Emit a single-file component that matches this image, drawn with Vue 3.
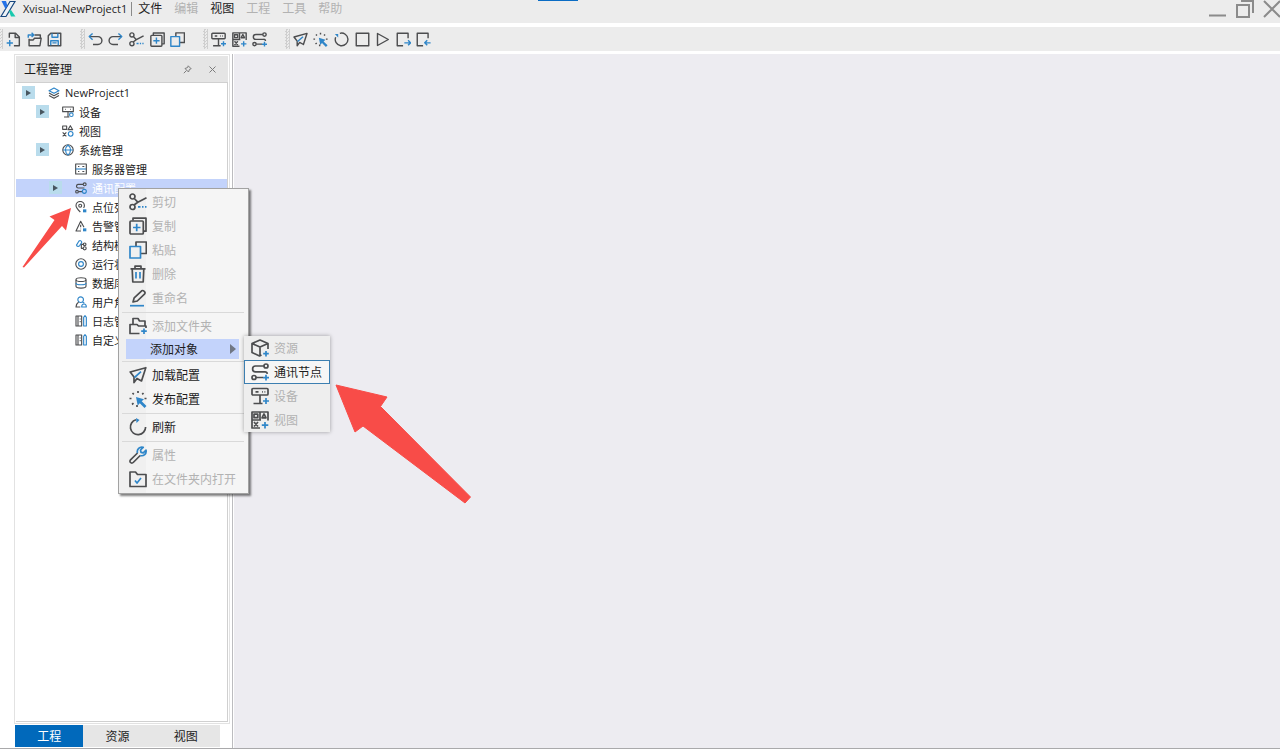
<template>
  <div class="app-shell">
    <svg class="icon-defs" aria-hidden="true">
      <symbol id="i-new" viewBox="0 0 18 18">
        <path d="M4 7V1.500h7.500l4.500 4.500v10.500H9.500" />
        <path d="M11 1.800V6.500h4.800" />
        <path class="blue" d="M4.500 9.500v7.500M.8 13.200h7.500" />
      </symbol>
      <symbol id="i-open" viewBox="0 0 18 18">
        <path d="M9 3.500h7v3.500M2.500 8v8.500h13l1.500-9H9L7.500 9.500h-5" />
        <path class="blue" d="M1.500 7V3.500h6.500M5.500 1l2.700 2.500L5.500 6" />
      </symbol>
      <symbol id="i-save" viewBox="0 0 18 18">
        <path d="M4.500 1.500h12v15h-15v-12z" />
        <path class="blue" d="M6 1.800v4.500h7V1.800M4.500 16v-5.500h9V16M6.500 13h5" />
      </symbol>
      <symbol id="i-undo" viewBox="0 0 18 18">
        <path d="M2 5.500h10a4.700 4.700 0 0 1 0 9.400H6" />
        <path class="blue" d="M5.500 1.800 1.500 5.500l4 3.700" />
      </symbol>
      <symbol id="i-redo" viewBox="0 0 18 18">
        <path d="M16 5.500H6a4.700 4.700 0 0 0 0 9.400h6" />
        <path class="blue" d="m12.500 1.800 4 3.700-4 3.700" />
      </symbol>
      <symbol id="i-cut" viewBox="0 0 18 18">
        <circle cx="3.500" cy="3.500" r="2.500" />
        <circle cx="3.500" cy="14" r="2.500" />
        <path d="m5.300 5.500 3.500 3.700 8.700-4.500M5 12l3.800-2.800" />
        <path class="blue" d="M9 13.800h2.500M13 13.800h1.500M16 13.800h1.500" />
      </symbol>
      <symbol id="i-copy" viewBox="0 0 18 18">
        <path d="M4 3.500V1.200h13v13h-2.500" />
        <rect x="1" y="4" width="13.300" height="13" rx="1" />
        <path class="blue" d="M7.700 6.700v7.500M4 10.500h7.500" />
      </symbol>
      <symbol id="i-paste" viewBox="0 0 18 18">
        <path d="M7 5.500V1h10.300v11.500H12" />
        <path class="blue" d="M1 5.500h10.500V17H1z" />
      </symbol>
      <symbol id="i-delete" viewBox="0 0 18 18">
        <path d="M1.500 3.800h15M6 3.500V1.200h6v2.300M3.200 4l.6 13h10.400l.6-13" />
        <path class="blue" d="M7 7v6.500M11 7v6.500" />
      </symbol>
      <symbol id="i-rename" viewBox="0 0 18 18">
        <path d="m4 13 1.200-4.200 7.500-7 c1.500-1 4.200 1.300 3 3L8.300 12z" />
        <path class="blue" d="M1 16.700h14" />
      </symbol>
      <symbol id="i-add-folder" viewBox="0 0 18 18">
        <path d="M4 7.500V1.500h5L10.500 4H16v5M10.500 16.500H1v-9h7L9.500 9H17v2" />
        <path class="blue" d="M15 11.500v5.500M12.200 14.200h5.600" />
      </symbol>
      <symbol id="i-device" viewBox="0 0 18 18">
        <rect x="1" y="1.500" width="16" height="6.500" rx="1" />
        <path d="M9 8v8.500M2.500 16.500h9M4.500 4.800h3M11 4.800h.8M13.500 4.800h.8" />
        <path class="blue" d="M15 11v6M12 14h6" />
      </symbol>
      <symbol id="i-view" viewBox="0 0 18 18">
        <path d="M9 17H1V1h16v8.500M9 1.500v8M1.500 9H10" />
        <rect x="3" y="3.200" width="3.800" height="3.500" />
        <path d="m13 3 2 3.800h-4zM3 11l4 4.500M7 11l-4 4.500" />
        <path class="blue" d="M14 11v6.500M10.800 14.200h6.500" />
      </symbol>
      <symbol id="i-route" viewBox="0 0 18 18">
        <circle cx="15" cy="3" r="2" />
        <circle cx="3" cy="14.500" r="2" />
        <path d="M13 3H4.500a2.900 2.900 0 0 0 0 5.800h9.500a2.300 2.300 0 0 1 2.300 2M5 14.500h7" />
        <path class="blue" d="M15 11.800v5.700M12 14.600h6" />
      </symbol>
      <symbol id="i-send" viewBox="0 0 18 18">
        <path d="m1.200 6 15.600-4.300L12.500 15 8 12.500l-3 4V11z" />
        <path class="blue" d="M5.500 11.500 12 5.700" />
      </symbol>
      <symbol id="i-publish" viewBox="0 0 18 18">
        <path d="M9 1v2M3.500 3l1.300 1.300M.5 8.500h2M3 14.500l1.500-1.300M8 15v2M14.500 3l-1.300 1.300M15.500 8.500h2" />
        <path class="blue-fill" d="m7 7 8 2.300-2.300 2L17.500 16l-2 2-4.700-4.800L8.700 15.500z" />
      </symbol>
      <symbol id="i-refresh" viewBox="0 0 18 18">
        <path d="M7 1.700A7.600 7.600 0 1 0 16.600 9" />
        <path class="blue-fill" d="m7 0 3.500 2L7.500 5z" />
      </symbol>
      <symbol id="i-rotate" viewBox="0 0 18 18">
        <path d="M7 1.600a7.600 7.600 0 1 1-5 4.600" />
        <path class="blue-fill" d="M1 2.500h4v4z" />
      </symbol>
      <symbol id="i-stop" viewBox="0 0 18 18"><path d="M1.500 1.500h15v15h-15z" /></symbol>
      <symbol id="i-play" viewBox="0 0 18 18"><path d="M3 1.800 16 9 3 16.200z" /></symbol>
      <symbol id="i-export" viewBox="0 0 18 18">
        <path d="M8.500 16.500h-7v-15h13v6" />
        <path class="blue" d="M10 13h7.500M14.500 10l3 3-3 3" />
      </symbol>
      <symbol id="i-import" viewBox="0 0 18 18">
        <path d="M8.500 16.500h-7v-15h13v6" />
        <path class="blue" d="M10.500 13h7M13.500 10l-3 3 3 3" />
      </symbol>
      <symbol id="i-wrench" viewBox="0 0 18 18">
        <path d="m8.500 7-7 6.800a1.900 1.900 0 0 0 2.700 2.700L11.200 9.500" />
        <path class="blue" d="M8.500 7a4.500 4.500 0 0 1 5.700-5.600L11.500 4l.5 2.300 2.300.5L17 4.200a4.500 4.500 0 0 1-5.800 5.300" />
      </symbol>
      <symbol id="i-folder-check" viewBox="0 0 18 18">
        <path d="M1 2h5.500L8.500 4.500H17v12H1z" />
        <path class="blue" d="m6 10.500 2 2.500 4-5" />
      </symbol>
      <symbol id="i-cube" viewBox="0 0 18 18">
        <path d="M10.500 16 8.500 17 1 13.500v-9L9 1l8 3.500V10M1 4.500 9 8l8-3.500M9 8v9" />
        <path class="blue" d="M15 12v5.500M12.200 14.700h5.600" />
      </symbol>
      <symbol id="i-layers" viewBox="0 0 18 18">
        <path class="blue" d="M9 1.500 1.500 5.500 9 9.500l7.500-4z" />
        <path d="m1.500 9 7.500 4 7.500-4M1.500 12.700l7.500 4 7.500-4" />
      </symbol>
      <symbol id="i-tree-device" viewBox="0 0 18 18">
        <path d="M1 1.500h16v7H1zM4.500 5h1M9 8.500v8M3 16.500h8M12.500 5h1" />
        <circle class="blue" cx="14" cy="13" r="2.700" />
      </symbol>
      <symbol id="i-tree-view" viewBox="0 0 18 18">
        <path d="M1 1.500h6v5H1zM12.500 1l3.500 6H9zM1 11l5.500 6M6.500 11 1 17" />
        <circle class="blue" cx="13" cy="13.300" r="3.500" />
      </symbol>
      <symbol id="i-globe" viewBox="0 0 18 18">
        <circle cx="9" cy="9" r="7.800" />
        <path class="blue" d="M1.500 9h15M9 1.500c-5 4-5 11 0 15M9 1.500c5 4 5 11 0 15" />
      </symbol>
      <symbol id="i-server" viewBox="0 0 18 18">
        <path d="M1 1.500h16v15H1z" />
        <path class="blue" d="M1.500 9h15" />
        <path d="M4.500 5.200h2M11 5.200h3M4.500 12.800h2M11 12.800h3" />
      </symbol>
      <symbol id="i-comm" viewBox="0 0 18 18">
        <path d="M12 3.500H4.500a2.800 2.800 0 0 0 0 5.500H14M5 14.500h6" />
        <circle cx="14.500" cy="3.500" r="2.200" />
        <circle cx="3" cy="14.500" r="2" />
        <circle class="blue" cx="14" cy="14" r="3" />
      </symbol>
      <symbol id="i-pin-point" viewBox="0 0 18 18">
        <path d="M8 16.500C4 12.500 1.500 10 1.500 7a6.300 6.300 0 0 1 12.600 0c0 1.300-.5 2.500-1.200 3.600" />
        <circle cx="7.800" cy="7" r="2.200" />
        <path class="blue-fill" d="M12 12.500h5v4.500h-5z" />
      </symbol>
      <symbol id="i-alarm" viewBox="0 0 18 18">
        <path d="M9 16.500H1.500L8.500 2l5 9M8.500 7v4M8.500 13v1" />
        <path class="blue-fill" d="M12 12.500h5v4.500h-5z" />
      </symbol>
      <symbol id="i-struct" viewBox="0 0 18 18">
        <path class="blue" d="M2 9.500 6 3a2.500 2.500 0 0 1 4 2.500L7 10a3 3 0 0 1-5-.5" />
        <path d="M9.500 8h3M9.500 8v6h3" />
        <circle cx="14.500" cy="8" r="2" />
        <circle cx="14.500" cy="14" r="2.300" />
      </symbol>
      <symbol id="i-status" viewBox="0 0 18 18">
        <circle cx="9" cy="9" r="7.800" />
        <circle class="blue" cx="9" cy="9" r="3.600" />
      </symbol>
      <symbol id="i-database" viewBox="0 0 18 18">
        <ellipse cx="9" cy="4" rx="7.500" ry="2.800" />
        <path d="M1.500 4v10c0 3.500 15 3.500 15 0V4" />
        <path class="blue" d="M1.500 9c0 3.500 15 3.500 15 0" />
      </symbol>
      <symbol id="i-user" viewBox="0 0 18 18">
        <circle class="blue" cx="8.500" cy="5.500" r="4.200" />
        <path d="M5.500 9C3 10.500 2 13 1.500 16.500H8" />
        <path class="blue" d="M10 16.500c0-6 7-6 7 0zM11 9l3 1.500" />
      </symbol>
      <symbol id="i-log" viewBox="0 0 18 18">
        <path d="M10 1.500H1.500v15H10zM4.500 1.500v15M7 6h1.500M7 10h1.500" />
        <path class="blue" d="M13 3.500 15 1l2 2.500v13h-4z" />
      </symbol>
    </svg>

    <header class="title-bar">
      <svg class="logo" viewBox="0 0 16 18" aria-hidden="true">
        <path d="M10 1.500h5L6 16.500H1z" fill="#eef3f7" stroke="#17477f" stroke-width="1.200" />
        <path fill="#19c9ae" d="m9 11 2-1 4.500 6.500H11z" />
        <path fill="#2472e8" d="M1.500 1H6l1.500 5-2 3z" />
      </svg>
      <h1 class="app-title">Xvisual-NewProject1</h1>
      <nav class="main-menu" aria-label="主菜单">
        <button v-for="item in mainMenu" :key="item.label" type="button" :disabled="item.disabled">
          {{ item.label }}
        </button>
      </nav>
      <div class="window-controls">
        <button type="button" aria-label="最小化">
          <svg viewBox="0 0 18 18"><path d="M0 15.500h17" /></svg>
        </button>
        <button type="button" aria-label="还原">
          <svg viewBox="0 0 18 18"><path d="M1 5h12v12H1zM5 1h12v12" /></svg>
        </button>
        <button type="button" aria-label="关闭">
          <svg viewBox="0 0 18 18"><path d="m1 1 16 16M17 1 1 17" /></svg>
        </button>
      </div>
    </header>

    <div class="tool-bar" role="toolbar" aria-label="工具栏">
      <div v-for="(group, i) in toolGroups" :key="i" class="tool-group">
        <span class="grip" aria-hidden="true"></span>
        <div class="tool-items" :style="{ width: group.width + 'px' }">
          <button v-for="tool in group.tools" :key="tool.icon" type="button" :aria-label="tool.label">
            <svg class="icon"><use :href="'#i-' + tool.icon" /></svg>
          </button>
        </div>
      </div>
    </div>

    <div class="main-area">
      <aside class="dock">
        <section class="panel">
          <header class="panel-header">
            <h2>工程管理</h2>
            <button type="button" aria-label="固定">
              <svg viewBox="0 0 9 9"><path d="M5.200.8 8.200 3.800 6.500 4.300 5.500 7 2 3.500 4.700 2.500zM3.500 5.500.8 8.200" /></svg>
            </button>
            <button type="button" aria-label="关闭面板">
              <svg viewBox="0 0 9 9"><path d="m1.500 1.500 6 6M7.500 1.500l-6 6" /></svg>
            </button>
          </header>
          <ul class="tree">
            <li
              v-for="node in treeNodes"
              :key="node.label"
              class="tree-row"
              :class="['level-' + node.level, { selected: node.label === selectedNode }]"
              @click="selectedNode = node.label"
            >
              <button v-if="node.branch" class="expander" type="button" :aria-label="'展开' + node.label">
                <svg viewBox="0 0 5 6"><path d="M0 0v6l5-3z" /></svg>
              </button>
              <span v-else class="expander-space"></span>
              <svg class="icon"><use :href="'#i-' + node.icon" /></svg>
              <span>{{ node.label }}</span>
            </li>
          </ul>
        </section>
        <div class="dock-tabs" role="tablist">
          <button
            v-for="tab in tabs"
            :key="tab"
            type="button"
            role="tab"
            :class="{ active: tab === activeTab }"
            :aria-selected="tab === activeTab"
            @click="activeTab = tab"
          >
            {{ tab }}
          </button>
        </div>
      </aside>
      <main class="workspace"></main>
    </div>

    <div class="context-menu" role="menu">
      <div v-for="(group, i) in contextGroups" :key="i" class="menu-group">
        <button
          v-for="item in group"
          :key="item.label"
          type="button"
          role="menuitem"
          class="menu-item"
          :class="{ parent: item.children }"
          :disabled="item.disabled"
        >
          <svg v-if="item.icon" class="icon"><use :href="'#i-' + item.icon" /></svg>
          <span>{{ item.label }}</span>
          <svg v-if="item.children" class="caret" viewBox="0 0 6 10"><path d="M0 0v10l6-5z" /></svg>
        </button>
      </div>
      <div class="sub-menu" role="menu">
        <button
          v-for="item in subItems"
          :key="item.label"
          type="button"
          role="menuitem"
          class="menu-item"
          :class="{ current: !item.disabled }"
          :disabled="item.disabled"
        >
          <svg class="icon"><use :href="'#i-' + item.icon" /></svg>
          <span>{{ item.label }}</span>
        </button>
      </div>
    </div>

    <svg class="pointer pointer-small" viewBox="0 0 50 60" aria-hidden="true">
      <path d="m49 0-21.500 8.500 5 3.500L.5 59 2 59.500 40 18l4 4.500z" />
    </svg>
    <svg class="pointer pointer-large" viewBox="0 0 136 120" aria-hidden="true">
      <path d="m1 1 51 12-6.500 9.500 90 90.500-5.500 6L28 42l-8 6z" />
    </svg>
  </div>
</template>

<script setup>
import { ref } from 'vue';

const selectedNode = ref('通讯配置');
const activeTab = ref('工程');
const tabs = ['工程', '资源', '视图'];

const mainMenu = [
  { label: '文件' },
  { label: '编辑', disabled: true },
  { label: '视图' },
  { label: '工程', disabled: true },
  { label: '工具', disabled: true },
  { label: '帮助', disabled: true }
];

const toolGroups = [
  {
    width: 62,
    tools: [
      { icon: 'new', label: '新建' },
      { icon: 'open', label: '打开' },
      { icon: 'save', label: '保存' }
    ]
  },
  {
    width: 103,
    tools: [
      { icon: 'undo', label: '撤销' },
      { icon: 'redo', label: '重做' },
      { icon: 'cut', label: '剪切' },
      { icon: 'copy', label: '复制' },
      { icon: 'paste', label: '粘贴' }
    ]
  },
  {
    width: 62,
    tools: [
      { icon: 'device', label: '添加设备' },
      { icon: 'view', label: '添加视图' },
      { icon: 'route', label: '添加通讯节点' }
    ]
  },
  {
    width: 144,
    tools: [
      { icon: 'send', label: '加载配置' },
      { icon: 'publish', label: '发布配置' },
      { icon: 'rotate', label: '刷新' },
      { icon: 'stop', label: '停止' },
      { icon: 'play', label: '运行' },
      { icon: 'export', label: '导出' },
      { icon: 'import', label: '导入' }
    ]
  }
];

const treeNodes = [
  { label: 'NewProject1', icon: 'layers', level: 0, branch: true },
  { label: '设备', icon: 'tree-device', level: 1, branch: true },
  { label: '视图', icon: 'tree-view', level: 1 },
  { label: '系统管理', icon: 'globe', level: 1, branch: true },
  { label: '服务器管理', icon: 'server', level: 2 },
  { label: '通讯配置', icon: 'comm', level: 2, branch: true },
  { label: '点位列表', icon: 'pin-point', level: 2 },
  { label: '告警管理', icon: 'alarm', level: 2 },
  { label: '结构模型', icon: 'struct', level: 2 },
  { label: '运行状态', icon: 'status', level: 2 },
  { label: '数据库', icon: 'database', level: 2 },
  { label: '用户角色', icon: 'user', level: 2 },
  { label: '日志管理', icon: 'log', level: 2 },
  { label: '自定义', icon: 'log', level: 2 }
];

const contextGroups = [
  [
    { label: '剪切', icon: 'cut', disabled: true },
    { label: '复制', icon: 'copy', disabled: true },
    { label: '粘贴', icon: 'paste', disabled: true },
    { label: '删除', icon: 'delete', disabled: true },
    { label: '重命名', icon: 'rename', disabled: true }
  ],
  [
    { label: '添加文件夹', icon: 'add-folder', disabled: true },
    { label: '添加对象', children: true }
  ],
  [
    { label: '加载配置', icon: 'send' },
    { label: '发布配置', icon: 'publish' }
  ],
  [{ label: '刷新', icon: 'refresh' }],
  [
    { label: '属性', icon: 'wrench', disabled: true },
    { label: '在文件夹内打开', icon: 'folder-check', disabled: true }
  ]
];

const subItems = [
  { label: '资源', icon: 'cube', disabled: true },
  { label: '通讯节点', icon: 'route' },
  { label: '设备', icon: 'device', disabled: true },
  { label: '视图', icon: 'view', disabled: true }
];
</script>

<style>
body {
  margin: 0;
}
</style>

<style scoped>
.app-shell {
  position: relative;
  display: flex;
  flex-direction: column;
  box-sizing: border-box;
  min-height: 100vh;
  overflow: hidden;
  border-bottom: 1px solid #a9a9ab;
  background: #fff;
  color: #1c1c1c;
  font-family: "Open Sans", "Noto Sans CJK SC", sans-serif;
  font-size: 12px;
}

button {
  border: 0;
  padding: 0;
  background: none;
  color: inherit;
  font: inherit;
}

h1,
h2 {
  margin: 0;
  font-size: 12px;
  font-weight: 400;
}

.icon-defs {
  position: absolute;
  width: 0;
  height: 0;
}

.icon {
  flex: none;
  fill: none;
  stroke: #4c4d4f;
  stroke-width: 1.7;
  stroke-linejoin: round;
}

.blue {
  stroke: #2f86c9;
}

.blue-fill {
  fill: #2f86c9;
  stroke: none;
}

/* title bar */
.title-bar {
  position: relative;
  display: flex;
  align-items: flex-start;
  height: 23px;
  background: #ececec;
  line-height: 18px;
}

.title-bar::before {
  content: '';
  position: absolute;
  top: 0;
  left: 42%;
  width: 40px;
  height: 1px;
  background: #0a6cc4;
}

.logo {
  width: 16px;
  height: 18px;
  margin-right: 7px;
}

.app-title {
  font-size: 11px;
  white-space: nowrap;
}

.main-menu {
  display: flex;
  gap: 12px;
  margin-left: 4px;
}

.main-menu::before {
  content: '';
  width: 1px;
  height: 14px;
  margin: 2px -6px 0 0;
  background: #8a8a8a;
}

.main-menu button {
  height: 18px;
}

button:disabled {
  color: #b2b2b2;
}

.window-controls {
  display: flex;
  gap: 9px;
  margin-right: -1px;
  margin-left: auto;
}

.window-controls button,
.window-controls svg {
  display: block;
  width: 18px;
  height: 18px;
}

.window-controls svg {
  fill: none;
  stroke: #8b8b8b;
  stroke-width: 2;
}

/* tool bar */
.tool-bar {
  display: flex;
  gap: 15px;
  height: 24px;
  margin: 4px 0 3px;
  background: #ececec;
}

.tool-group {
  display: flex;
  align-items: center;
}

.tool-group:first-child {
  margin-left: -2px;
}

.grip {
  width: 5px;
  height: 20px;
  background: conic-gradient(#cfcfcf 25%, transparent 0 50%, #cfcfcf 0 75%, transparent 0) 0 0 / 3px 3px;
}

.tool-items {
  display: flex;
}

.tool-items button {
  display: flex;
  flex: 1;
  align-items: center;
  justify-content: center;
  height: 24px;
}

.tool-items .icon {
  width: 15px;
  height: 15px;
}

/* dock */
.main-area {
  display: flex;
  flex: 1;
}

.dock {
  display: flex;
  flex-direction: column;
  box-sizing: border-box;
  width: 233px;
  margin-right: 1px;
  padding: 0 2px 1px 14px;
  border-right: 1px solid #bcbcbf;
}

.panel {
  display: flex;
  flex: 1;
  flex-direction: column;
  padding: 1px;
  border: 1px solid #e2e2e2;
}

.panel-header {
  display: flex;
  align-items: center;
  gap: 16px;
  height: 26px;
  padding: 0 11px 0 8px;
  background: #e5e5e5;
}

.panel-header h2 {
  flex: 1;
}

.panel-header button,
.panel-header svg {
  display: block;
  width: 9px;
  height: 9px;
}

.panel-header svg {
  fill: none;
  stroke: #7c7c7c;
  stroke-width: 1;
}

.tree {
  flex: 1;
  margin: 0;
  padding: 0;
  border: 1px solid #d0d0d0;
  border-left: 0;
  list-style: none;
  font-size: 11px;
}

.tree-row {
  display: flex;
  align-items: center;
  height: 19px;
  white-space: nowrap;
}

.level-0 {
  padding-left: 6px;
}

.level-1 {
  padding-left: 20px;
}

.level-2 {
  padding-left: 33px;
}

.tree-row.selected {
  background: linear-gradient(#c3d3fb, #c3d3fb) 0 1px / 100% 18px no-repeat;
  color: #fff;
}

.expander,
.expander-space {
  display: flex;
  align-items: center;
  justify-content: center;
  width: 13px;
  height: 13px;
  margin-right: 13px;
}

.expander {
  background: #b9dcec;
}

.expander svg {
  width: 5px;
  height: 6px;
  fill: #48565f;
}

.tree-row .icon {
  width: 12px;
  height: 12px;
  margin-right: 5px;
}

.dock-tabs {
  display: flex;
  height: 22px;
  margin: 1px 10px 0 1px;
  background: #e6e6e6;
}

.dock-tabs button {
  flex: 1;
}

.dock-tabs .active {
  background: #0169bb;
  color: #fff;
}

.workspace {
  flex: 1;
  background: #edecf1;
}

/* context menu */
.context-menu {
  position: absolute;
  top: 188px;
  left: 118px;
  box-sizing: border-box;
  width: 131px;
  padding: 1px 1px 2px;
  border: 1px solid #a2a2a2;
  background: linear-gradient(90deg, #f0f0f0 27px, #f5f5f5 27px);
  box-shadow: 2px 2px 2px rgba(0, 0, 0, 0.5);
}

.menu-group + .menu-group::before {
  content: '';
  display: block;
  height: 1px;
  margin: 2px 3px 1px 2px;
  background: #d9d9d9;
}

.menu-item {
  display: flex;
  align-items: center;
  box-sizing: border-box;
  gap: 5px;
  width: 100%;
  height: 24px;
  padding-left: 9px;
  white-space: nowrap;
}

.menu-item .icon {
  width: 18px;
  height: 18px;
}

.menu-item.parent {
  width: auto;
  height: 20px;
  margin: 1px 6px;
  padding: 0 3px 0 24px;
  background: #c3d3fb;
}

.caret {
  width: 6px;
  height: 10px;
  margin-left: 27px;
  fill: #707784;
}

.sub-menu {
  position: absolute;
  top: 147px;
  left: 125px;
  width: 86px;
  background: #eeeeee;
  box-shadow: 0 0 4px rgba(0, 0, 0, 0.35);
}

.sub-menu .menu-item {
  padding-left: 7px;
}

.sub-menu .current {
  padding-left: 6px;
  border: 1px solid #3c7fb1;
  background: #f6f6f6;
}

/* arrows drawn over the window */
.pointer {
  position: absolute;
  fill: #f84c48;
  pointer-events: none;
}

.pointer-small {
  top: 208px;
  left: 22px;
  width: 50px;
  height: 60px;
}

.pointer-large {
  top: 384px;
  left: 335px;
  width: 136px;
  height: 120px;
  stroke: #f84c48;
  stroke-linejoin: round;
}
</style>
